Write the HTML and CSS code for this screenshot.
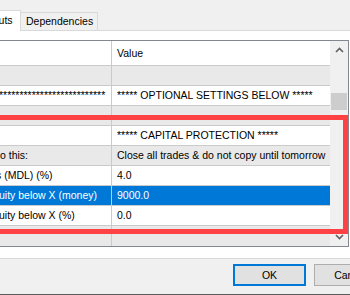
FILE: index.html
```html
<!DOCTYPE html>
<html>
<head>
<meta charset="utf-8">
<link rel="stylesheet" href="styles.css">
</head>
<body>
<div class="tabstrip">
  <div class="tab tab-active">Inputs</div>
  <div class="tab">Dependencies</div>
  <div class="tab-fill"></div>
</div>
<div class="page">
  <div class="grid">
    <div class="rows">
      <div class="row head"><div class="c1"></div><div class="c2">Value</div></div>
      <div class="row alt"><div class="c1"></div><div class="c2"></div></div>
      <div class="row"><div class="c1"><span class="cut1">**************************</span></div><div class="c2">***** OPTIONAL SETTINGS BELOW *****</div></div>
      <div class="row alt"><div class="c1"></div><div class="c2"></div></div>
      <div class="row"><div class="c1"></div><div class="c2">***** CAPITAL PROTECTION *****</div></div>
      <div class="row alt"><div class="c1"><span>o this:</span></div><div class="c2">Close all trades &amp; do not copy until tomorrow</div></div>
      <div class="row"><div class="c1"><span class="cut4">s (MDL) (%)</span></div><div class="c2">4.0</div></div>
      <div class="row selected"><div class="c1"><span class="cut1">uity below X (money)</span></div><div class="c2">9000.0</div></div>
      <div class="row"><div class="c1"><span class="cut1">uity below X (%)</span></div><div class="c2">0.0</div></div>
      <div class="row alt last"><div class="c1"></div><div class="c2"></div></div>
    </div>
    <div class="vscroll">
      <div class="sb-arrow sb-up"><svg width="9" height="6" viewBox="0 0 9 6"><polyline points="1,5 4.5,1.5 8,5" fill="none" stroke="#606060" stroke-width="1.6"/></svg></div>
      <div class="sb-track"><div class="sb-thumb"></div></div>
      <div class="sb-arrow sb-down"><svg width="9" height="6" viewBox="0 0 9 6"><polyline points="1,1 4.5,4.5 8,1" fill="none" stroke="#606060" stroke-width="1.6"/></svg></div>
    </div>
  </div>
</div>
<div class="footer">
  <button class="btn btn-default">OK</button>
  <button class="btn">Cancel</button>
</div>
<div class="edge"></div>
<div class="highlight"></div>
</body>
</html>
```
FILE: styles.css
```css
html, body {
  margin: 0;
  padding: 0;
}
body {
  width: 350px;
  height: 295px;
  overflow: hidden;
  position: relative;
  background: #f0f0f0;
  font-family: "Liberation Sans", Arial, sans-serif;
  font-size: 10.5px;
  color: #000;
}
.tabstrip {
  display: flex;
  align-items: flex-end;
  height: 31px;
  margin-left: -23px;
}
.tab {
  box-sizing: border-box;
  height: 19px;
  line-height: 17px;
  padding: 0 4px 0 5px;
  border: 1px solid #d9d9d9;
  border-left: none;
  background: #f0f0f0;
  white-space: nowrap;
  flex-shrink: 0;
}
.tab-active {
  width: 44px;
  height: 21px;
  line-height: 19px;
  padding-left: 6px;
  background: #fff;
  border-left: 1px solid #d9d9d9;
  border-bottom: none;
}
.tab-fill {
  flex: 1;
  height: 1px;
  background: #d9d9d9;
}
.page {
  background: #fff;
  padding: 9px 0 11px;
  border-bottom: 1px solid #d9d9d9;
}
.grid {
  box-sizing: border-box;
  margin-left: -10px;
  width: 359px;
  height: 207px;
  border: 1px solid #828790;
  display: flex;
}
.rows {
  flex: 1;
  overflow: hidden;
}
.row {
  box-sizing: border-box;
  display: flex;
  height: 20px;
  line-height: 19px;
  border-bottom: 1px solid #cacaca;
  background: #fff;
  white-space: nowrap;
}
.row.head {
  height: 25px;
  line-height: 24px;
}
.row.alt {
  background: #e9e9e9;
}
.row.last {
  border-bottom: none;
}
.row.selected {
  background: #0078d7;
  color: #fff;
}
.c1 {
  box-sizing: border-box;
  width: 121px;
  flex-shrink: 0;
  padding-left: 9px;
  border-right: 1px solid #cacaca;
  overflow: hidden;
}
.c2 {
  flex: 1;
  padding-left: 5px;
  overflow: hidden;
}
.cut1 {
  margin-left: -1px;
}
.cut4 {
  margin-left: -4px;
}
.vscroll {
  width: 18px;
  flex-shrink: 0;
  background: #f0f0f0;
  display: flex;
  flex-direction: column;
}
.sb-arrow {
  height: 17px;
  display: flex;
  align-items: center;
  justify-content: center;
}
.sb-down {
  height: 19px;
}
.sb-track {
  flex: 1;
}
.sb-thumb {
  margin: 35px 1px 0;
  height: 17px;
  background: #cdcdcd;
}
.footer {
  height: 35px;
  box-sizing: border-box;
  padding: 5px 0 0 233px;
  display: flex;
  gap: 8px;
}
.btn {
  flex-shrink: 0;
  box-sizing: border-box;
  width: 73px;
  height: 22px;
  margin: 0;
  padding: 0;
  background: #e1e1e1;
  border: 1px solid #adadad;
  font-family: "Liberation Sans", Arial, sans-serif;
  font-size: 10.5px;
  color: #000;
}
.btn-default {
  border: 2px solid #0078d7;
}
.edge {
  height: 1px;
  background: #5a5a5a;
}
.highlight {
  position: absolute;
  left: -10px;
  top: 115px;
  width: 358px;
  height: 119px;
  box-sizing: border-box;
  border: 5px solid #fe4144;
  pointer-events: none;
}
```
